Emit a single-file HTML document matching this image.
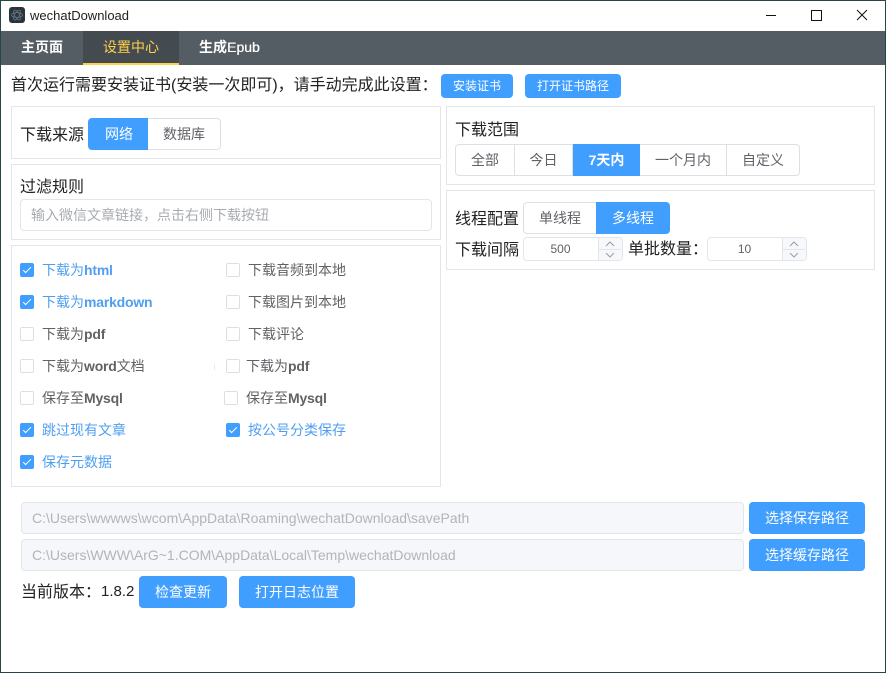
<!DOCTYPE html>
<html lang="zh"><head><meta charset="utf-8"><title>wechatDownload</title>
<style>
html,body{margin:0;padding:0;background:#fff}
body{width:886px;height:673px;position:relative;overflow:hidden;font-family:"Liberation Sans","Noto Sans CJK SC",sans-serif;color:#222}
.a,.btn,.seg,.panel,.cb,.t,.inp{position:absolute;box-sizing:border-box}
.t{white-space:nowrap;line-height:20px}
.frame{position:absolute;left:0;top:0;width:886px;height:673px;box-sizing:border-box;border:1px solid #24474a;pointer-events:none;z-index:5}
.panel{border:1px solid #e2e5ea;background:#fff}
.btn{background:#409eff;color:#fff;border-radius:4px;text-align:center;font-size:14px}
.btn.s{font-size:12px}
.seg{text-align:center;font-size:14px;line-height:30px;color:#606266;border:1px solid #dcdfe6;height:32px;background:#fff}
.seg.on{background:#409eff;border-color:#409eff;color:#fff}
.inp{border:1px solid #e2e5ea;border-radius:4px;background:#fff}
.inp.dis{background:#f5f7fa;color:#b1b4ba;font-size:14px;line-height:30px;padding-left:10px;height:32px;white-space:nowrap}
.cb{width:14px;height:14px;border:1px solid #dcdfe6;border-radius:2px;background:#fff}
.cb.on{background:#409eff;border-color:#409eff}
.cb.on:after{content:"";position:absolute;left:4px;top:1px;width:3px;height:7px;border:solid #fff;border-width:0 1px 1px 0;transform:rotate(45deg)}
.l{font-size:14px;color:#606266;font-weight:400}
.l b{font-weight:700;letter-spacing:-.2px}
.l.on{color:#4f9fef}
.h{font-size:16px;color:#222}
.spin{position:absolute;right:0;top:0;width:23px;height:22px;border-left:1px solid #e2e5ea;background:#f7f8fb;border-radius:0 4px 4px 0}
.spin i{position:absolute;left:0;top:11px;width:22px;height:1px;background:#e2e5ea}
.spin svg{position:absolute;left:6px;width:10px;height:6px}
</style></head><body>
<div class="frame"></div>

<!-- title bar -->
<div class="a" style="left:9px;top:7px;width:16px;height:16px;background:#2b343d;border-radius:3px"></div>
<svg class="a" style="left:9px;top:7px" width="16" height="16" viewBox="0 0 16 16" fill="none" stroke="#62757f" stroke-width=".8"><ellipse cx="8" cy="8" rx="5.5" ry="2.4"/><ellipse cx="8" cy="8" rx="5.5" ry="2.4" transform="rotate(60 8 8)"/><ellipse cx="8" cy="8" rx="5.5" ry="2.4" transform="rotate(120 8 8)"/></svg>
<div class="t" style="left:30px;top:6px;font-size:13px;color:#222">wechatDownload</div>
<svg class="a" style="left:760px;top:5px" width="120" height="22" viewBox="0 0 120 22" fill="none" stroke="#111" stroke-width="1"><path d="M6 10.5H16"/><path d="M51.5 5.5h10v10h-10z"/><path d="M97 5L107 15M107 5L97 15"/></svg>

<!-- nav -->
<div class="a" style="left:1px;top:31px;width:884px;height:34px;background:#545c64"></div>
<div class="a" style="left:83px;top:31px;width:96px;height:34px;background:#434a50;border-bottom:2px solid #ffd04b"></div>
<div class="t" style="left:21px;top:37px;font-size:14px;font-weight:700;color:#fff">主页面</div>
<div class="t" style="left:103px;top:37px;font-size:14px;color:#ffd04b">设置中心</div>
<div class="t" style="left:199px;top:37px;font-size:14px;font-weight:700;color:#fff">生成<span style="font-weight:400;text-shadow:.3px 0 0 #fff">Epub</span></div>

<!-- cert row -->
<div class="t h" style="left:11px;top:76px">首次运行需要安装证书(安装一次即可)，请手动完成此设置：</div>
<div class="btn s" style="left:441px;top:74px;width:72px;height:24px;line-height:24px">安装证书</div>
<div class="btn s" style="left:525px;top:74px;width:96px;height:24px;line-height:24px">打开证书路径</div>

<!-- left panels -->
<div class="panel" style="left:11px;top:106px;width:430px;height:53px"></div>
<div class="t h" style="left:20px;top:126px">下载来源</div>
<div class="seg on" style="left:88px;top:118px;width:60px;padding-left:2px;border-radius:4px 0 0 4px">网络</div>
<div class="seg" style="left:148px;top:118px;width:73px;border-left:0;border-radius:0 4px 4px 0">数据库</div>

<div class="panel" style="left:11px;top:164px;width:430px;height:76px"></div>
<div class="t h" style="left:20px;top:178px">过滤规则</div>
<div class="inp" style="left:20px;top:199px;width:412px;height:32px"></div>
<div class="t" style="left:31px;top:205px;font-size:14px;color:#a8abb2">输入微信文章链接，点击右侧下载按钮</div>

<div class="panel" style="left:11px;top:245px;width:430px;height:242px"></div>

<div class="cb on" style="left:20px;top:263px"></div><div class="t l on" style="left:42px;top:260px">下载为<b>html</b></div>
<div class="cb" style="left:226px;top:263px"></div><div class="t l" style="left:248px;top:260px">下载音频到本地</div>
<div class="cb on" style="left:20px;top:295px"></div><div class="t l on" style="left:42px;top:292px">下载为<b>markdown</b></div>
<div class="cb" style="left:226px;top:295px"></div><div class="t l" style="left:248px;top:292px">下载图片到本地</div>
<div class="cb" style="left:20px;top:327px"></div><div class="t l" style="left:42px;top:324px">下载为<b>pdf</b></div>
<div class="cb" style="left:226px;top:327px"></div><div class="t l" style="left:248px;top:324px">下载评论</div>
<div class="cb" style="left:20px;top:359px"></div><div class="t l" style="left:42px;top:356px">下载为<b>word</b>文档</div>
<div class="a" style="left:214px;top:364px;width:1px;height:6px;background:#e8eaee"></div>
<div class="cb" style="left:226px;top:359px"></div><div class="t l" style="left:246px;top:356px">下载为<b>pdf</b></div>
<div class="cb" style="left:20px;top:391px"></div><div class="t l" style="left:42px;top:388px">保存至<b>Mysql</b></div>
<div class="cb" style="left:224px;top:391px"></div><div class="t l" style="left:246px;top:388px">保存至<b>Mysql</b></div>
<div class="cb on" style="left:20px;top:423px"></div><div class="t l on" style="left:42px;top:420px">跳过现有文章</div>
<div class="cb on" style="left:226px;top:423px"></div><div class="t l on" style="left:248px;top:420px">按公号分类保存</div>
<div class="cb on" style="left:20px;top:455px"></div><div class="t l on" style="left:42px;top:452px">保存元数据</div>

<!-- right panels -->
<div class="panel" style="left:446px;top:106px;width:429px;height:79px"></div>
<div class="t h" style="left:455px;top:121px">下载范围</div>
<div class="seg" style="left:455px;top:144px;width:60px;border-radius:4px 0 0 4px">全部</div>
<div class="seg" style="left:515px;top:144px;width:58px;border-left:0">今日</div>
<div class="seg on" style="left:573px;top:144px;width:67px;font-weight:700">7天内</div>
<div class="seg" style="left:640px;top:144px;width:87px;border-left:0">一个月内</div>
<div class="seg" style="left:727px;top:144px;width:73px;border-left:0;border-radius:0 4px 4px 0">自定义</div>

<div class="panel" style="left:446px;top:190px;width:429px;height:80px"></div>
<div class="t h" style="left:455px;top:210px">线程配置</div>
<div class="seg" style="left:523px;top:202px;width:73px;border-right:0;border-radius:4px 0 0 4px">单线程</div>
<div class="seg on" style="left:596px;top:202px;width:74px;border-radius:0 4px 4px 0">多线程</div>
<div class="t h" style="left:455px;top:241px">下载间隔</div>
<div class="inp" style="left:523px;top:237px;width:100px;height:24px">
  <div class="t" style="left:0;top:1px;width:73px;text-align:center;font-size:12px;color:#606266">500</div>
  <div class="spin"><i></i><svg style="top:3px" viewBox="0 0 10 6" fill="none" stroke="#9a9da3"><path d="M1 5l4-4 4 4"/></svg><svg style="top:14px" viewBox="0 0 10 6" fill="none" stroke="#9a9da3"><path d="M1 1l4 4 4-4"/></svg></div>
</div>
<div class="t h" style="left:628px;top:240px">单批数量：</div>
<div class="inp" style="left:707px;top:237px;width:100px;height:24px">
  <div class="t" style="left:0;top:1px;width:73px;text-align:center;font-size:12px;color:#606266">10</div>
  <div class="spin"><i></i><svg style="top:3px" viewBox="0 0 10 6" fill="none" stroke="#9a9da3"><path d="M1 5l4-4 4 4"/></svg><svg style="top:14px" viewBox="0 0 10 6" fill="none" stroke="#9a9da3"><path d="M1 1l4 4 4-4"/></svg></div>
</div>

<!-- paths -->
<div class="inp dis" style="left:21px;top:502px;width:723px">C:\Users\wwwws\wcom\AppData\Roaming\wechatDownload\savePath</div>
<div class="btn" style="left:749px;top:502px;width:116px;height:32px;line-height:32px">选择保存路径</div>
<div class="inp dis" style="left:21px;top:539px;width:723px">C:\Users\WWW\ArG~1.COM\AppData\Local\Temp\wechatDownload</div>
<div class="btn" style="left:749px;top:539px;width:116px;height:32px;line-height:32px">选择缓存路径</div>

<!-- version -->
<div class="t h" style="left:21px;top:583px">当前版本：</div>
<div class="t h" style="left:101px;top:582px;font-size:15px">1.8.2</div>
<div class="btn" style="left:139px;top:576px;width:88px;height:32px;line-height:32px">检查更新</div>
<div class="btn" style="left:239px;top:576px;width:116px;height:32px;line-height:32px">打开日志位置</div>
</body></html>
